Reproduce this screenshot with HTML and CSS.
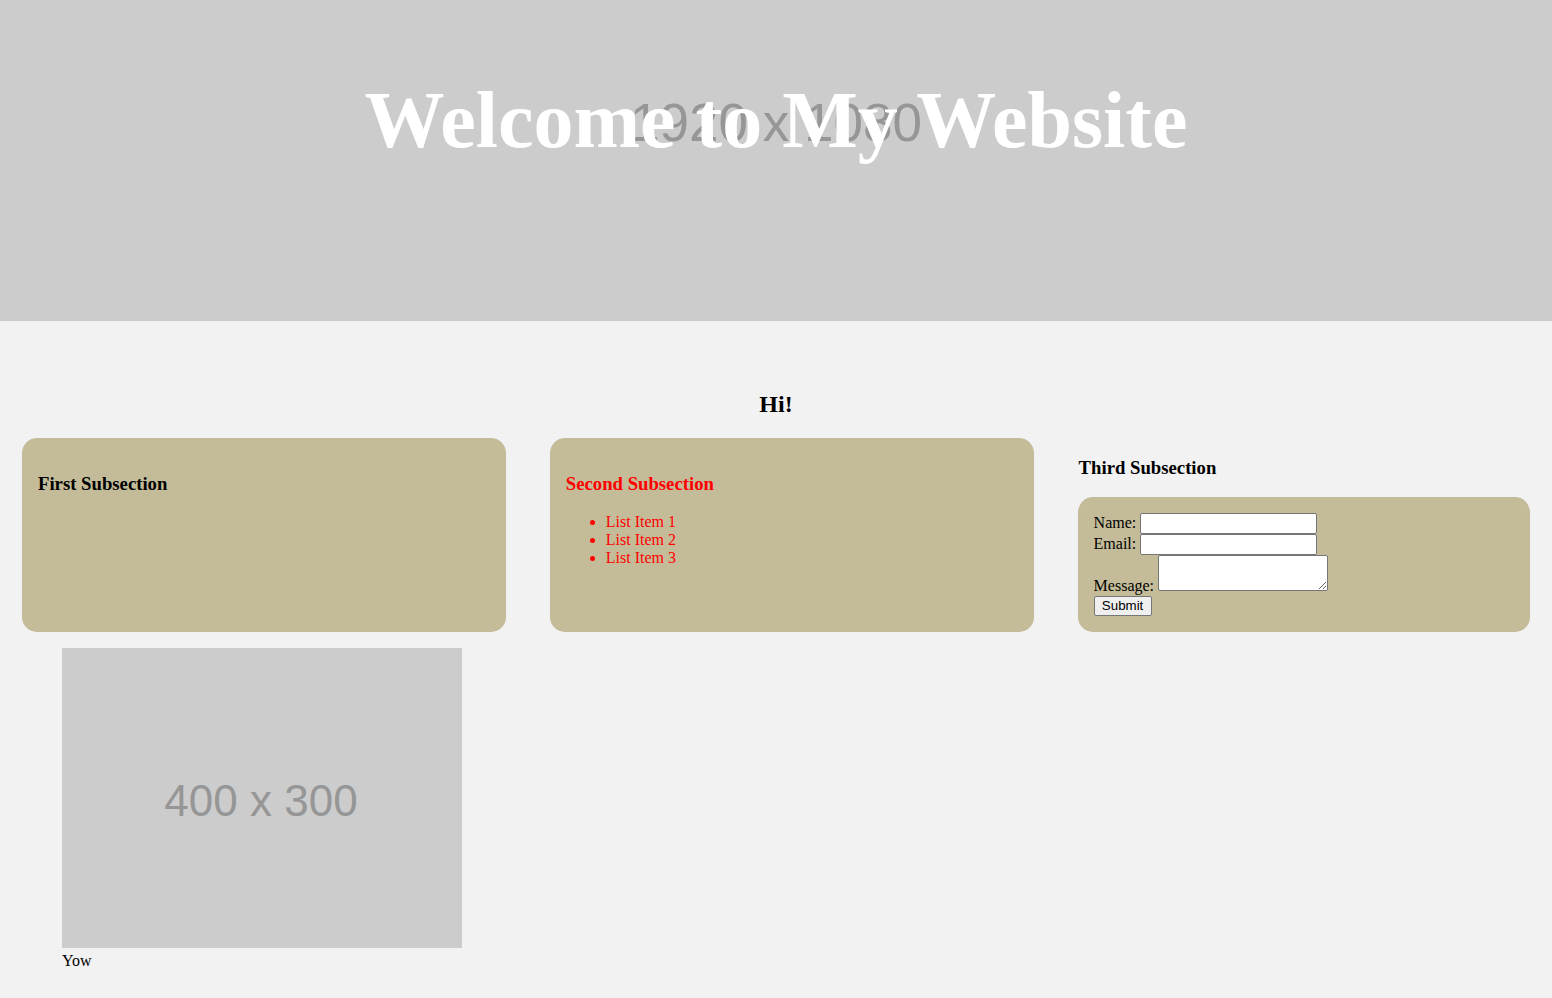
FILE: index.html
```html
<!DOCTYPE html>
<html lang="en">
<head>
<meta charset="utf-8">
<title>Welcome to My Website</title>
<link rel="stylesheet" href="styles.css">
</head>
<body>
<header class="hero">
  <svg class="hero-bg" viewBox="0 0 1552 321" preserveAspectRatio="none" aria-hidden="true">
    <rect x="0" y="0" width="1552" height="321" fill="#cccccc"/>
    <text x="776" y="141" text-anchor="middle" class="ph-text-lg">1920 x 1080</text>
  </svg>
  <h1 class="hero-title">Welcome to My Website</h1>
</header>
<main class="content">
  <h2 class="greeting">Hi!</h2>
  <div class="row">
    <section class="card">
      <h3 class="card-title">First Subsection</h3>
    </section>
    <section class="card card-red">
      <h3 class="card-title">Second Subsection</h3>
      <ul class="items">
        <li>List Item 1</li>
        <li>List Item 2</li>
        <li>List Item 3</li>
      </ul>
    </section>
    <section class="col">
      <h3 class="card-title">Third Subsection</h3>
      <form class="card form-card">
        <label for="name">Name:</label> <input class="field" type="text" id="name"><br>
        <label for="email">Email:</label> <input class="field" type="email" id="email"><br>
        <label for="msg">Message:</label> <textarea class="area" id="msg"></textarea><br>
        <button class="btn" type="button">Submit</button>
      </form>
    </section>
  </div>
  <figure class="fig">
    <svg class="ph" width="400" height="300" viewBox="0 0 400 300" aria-hidden="true">
      <rect x="0" y="0" width="400" height="300" fill="#cccccc"/>
      <text x="199" y="168" text-anchor="middle" class="ph-text">400 x 300</text>
    </svg>
    <figcaption class="caption">Yow</figcaption>
  </figure>
</main>
</body>
</html>
```
FILE: styles.css
```css
html, body {
  margin: 0;
  padding: 0;
}
body {
  background: #f2f2f2;
  color: #000;
  font-family: "Liberation Serif", "Times New Roman", serif;
  font-size: 16px;
}
.hero {
  display: grid;
  height: 321px;
  background: #cccccc;
  overflow: hidden;
}
.hero-bg {
  grid-area: 1 / 1;
  width: 100%;
  height: 321px;
  display: block;
}
.ph-text-lg {
  font-family: "Liberation Sans", Arial, sans-serif;
  font-size: 53px;
  fill: #969696;
}
.hero-title {
  grid-area: 1 / 1;
  align-self: start;
  margin: 75px 0 0;
  text-align: center;
  color: #fff;
  font-size: 80px;
  font-weight: bold;
  position: relative;
}
.content {
  padding: 50px 22px 12px;
}
.greeting {
  text-align: center;
  font-size: 24px;
  font-weight: bold;
  margin: 19.92px 0;
}
.row {
  display: flex;
  justify-content: space-between;
  align-items: stretch;
}
.card {
  background: #c4bc99;
  border-radius: 15px;
  padding: 16px;
  width: 30%;
}
.col {
  width: 30%;
  display: flex;
  flex-direction: column;
}
.col .form-card {
  width: auto;
  margin: 0;
}
.card-title {
  font-size: 18.72px;
  font-weight: bold;
  margin: 18.72px 0;
}
.col .card-title {
  margin-left: 1px;
}
.card-red {
  color: red;
}
.items {
  margin: 16px 0;
  padding-left: 40px;
}
.field {
  box-sizing: border-box;
  width: 177px;
  height: 21px;
  margin: 0;
  padding: 1px 2px;
  border: 1px solid #767676;
  border-radius: 2px;
  background: #fff;
  font-family: "Liberation Sans", Arial, sans-serif;
  font-size: 13.33px;
}
.area {
  box-sizing: border-box;
  width: 170px;
  height: 36px;
  margin: 0;
  padding: 2px;
  border: 1px solid #767676;
  border-radius: 2px;
  background: #fff;
  font-family: "Liberation Mono", monospace;
  font-size: 13.33px;
  vertical-align: baseline;
}
.btn {
  box-sizing: border-box;
  width: 58px;
  height: 20px;
  margin: 1px 0 0;
  padding: 0 6px;
  border: 1px solid #767676;
  border-radius: 2px;
  background: #efefef;
  color: #000;
  font-family: "Liberation Sans", Arial, sans-serif;
  font-size: 13.33px;
  line-height: 16px;
  vertical-align: top;
}
.fig {
  margin: 16px 40px;
}
.ph {
  vertical-align: baseline;
}
.ph-text {
  font-family: "Liberation Sans", Arial, sans-serif;
  font-size: 44px;
  fill: #969696;
}
.caption {
  margin: 0;
}
```
